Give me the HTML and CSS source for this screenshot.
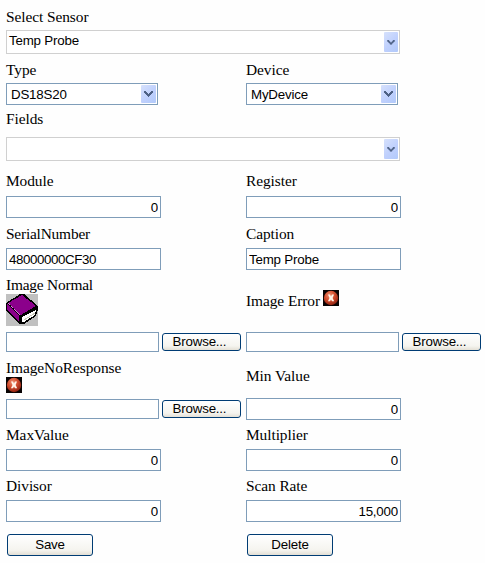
FILE: index.html
```html
<!DOCTYPE html>
<html lang="en">
<head>
<meta charset="utf-8">
<title>Sensor</title>
<link rel="stylesheet" href="styles.css">
</head>
<body>
<svg class="defs" width="0" height="0">
  <defs>
    <radialGradient id="red" cx=".4" cy=".3" r=".7"><stop offset="0" stop-color="#ee8f70"/><stop offset=".5" stop-color="#d34e2e"/><stop offset="1" stop-color="#932412"/></radialGradient>
    <symbol id="chevron" viewBox="0 0 9 6"><path d="M0 0h2v1h1v1h1v1h1V2h1V1h1V0h2v2H8v1H7v1H6v1H5v1H4V5H3V4H2V3H1V2H0z" fill="#4d6185"/></symbol>
    <symbol id="error" viewBox="0 0 16 16"><path d="M0 0h16v16H0z" fill="#080303"/><circle cx="8" cy="8" r="7.2" fill="url(#red)"/><path d="M5 4.500h2l1 2 1-2h2L9.600 8l1.600 3.300H9L8 9.400l-1 1.900H4.900L6.500 8z" fill="#fff4e8"/></symbol>
  </defs>
</svg>
<form class="form">
  <div class="row sensor">
    <div class="field"><label>Select Sensor</label>
      <div class="combo wide"><span class="value">Temp Probe</span><span class="arrow"><svg width="8" height="5"><use href="#chevron"/></svg></span></div></div>
  </div>
  <div class="row type">
    <div class="field"><label>Type</label>
      <div class="combo"><span class="value">DS18S20</span><span class="arrow"><svg width="9" height="6"><use href="#chevron"/></svg></span></div></div>
    <div class="field"><label>Device</label>
      <div class="combo"><span class="value">MyDevice</span><span class="arrow"><svg width="9" height="6"><use href="#chevron"/></svg></span></div></div>
  </div>
  <div class="row fields">
    <div class="field"><label>Fields</label>
      <div class="combo wide"><span class="value"></span><span class="arrow"><svg width="8" height="5"><use href="#chevron"/></svg></span></div></div>
  </div>
  <div class="row module">
    <div class="field"><label>Module</label><input class="text num" value="0"></div>
    <div class="field"><label>Register</label><input class="text num" value="0"></div>
  </div>
  <div class="row serial">
    <div class="field"><label class="tight">SerialNumber</label><input class="text code" value="48000000CF30"></div>
    <div class="field"><label>Caption</label><input class="text" value="Temp Probe"></div>
  </div>
  <div class="row normal">
    <div class="field"><label class="tight">Image Normal</label>
      <svg class="picture" width="32" height="32" shape-rendering="crispEdges">
        <path d="M0 0h32v32H0z" fill="#c0c0c0"/>
        <path d="M14 0h4l14 12v4l-2 6-12 8h-5L0 16V9z" fill="#000"/>
        <path d="M16 1l14 11-15 9L2 9z" fill="#8b008b"/>
        <path d="M1 10l12 12v6L1 15z" fill="#8b008b"/>
        <path d="M2 9l12 12" stroke="#d58bd5" stroke-dasharray="3 1" fill="none"/>
        <path d="M16 23l14-7-1 5-11 7h-2z" fill="#fff"/>
        <path d="M18 26l11-7" stroke="#c8c8b8" fill="none"/>
      </svg>
      <div class="file"><input class="text path"><button class="button browse" type="button">Browse...</button></div></div>
    <div class="field"><label class="with-icon">Image Error <svg width="16" height="16"><use href="#error"/></svg></label>
      <div class="file"><input class="text path"><button class="button browse" type="button">Browse...</button></div></div>
  </div>
  <div class="row missing">
    <div class="field"><label>ImageNoResponse</label>
      <svg class="picture" width="16" height="16"><use href="#error"/></svg>
      <div class="file"><input class="text path"><button class="button browse" type="button">Browse...</button></div></div>
    <div class="field"><label class="min">Min Value</label><input class="text num" value="0"></div>
  </div>
  <div class="row pair">
    <div class="field"><label>MaxValue</label><input class="text num" value="0"></div>
    <div class="field"><label>Multiplier</label><input class="text num" value="0"></div>
  </div>
  <div class="row pair">
    <div class="field"><label>Divisor</label><input class="text num" value="0"></div>
    <div class="field"><label>Scan Rate</label><input class="text num" value="15,000"></div>
  </div>
  <div class="row actions">
    <button class="button" type="button">Save</button>
    <button class="button" type="button">Delete</button>
  </div>
</form>
</body>
</html>
```
FILE: styles.css
```css
* { box-sizing: border-box; }
body { margin: 0; background: #fefefe; color: #000; overflow: hidden; }
.defs { position: absolute; }
.form { padding: 8px 0 0 6px; font: 15.4px/18px "Liberation Serif", serif; }
.row { display: grid; grid-template-columns: 240px 239px; }
.field { display: flex; flex-direction: column; align-items: flex-start; }
label { display: block; height: 18px; margin-bottom: 5px; white-space: nowrap; letter-spacing: -.07px; }
.tight { letter-spacing: -.2px; }

.text, .combo, .button { font: 13.33px/18px "Liberation Sans", Arial, sans-serif; letter-spacing: -.2px; color: #000; }
.text { width: 155px; height: 22px; margin: 0; padding: 1px 2px 0; border: 1px solid #7f9db9; border-radius: 0; background: #fff; outline: 0; }
.num { text-align: right; }
.text.code { letter-spacing: -.4px; }
.path { width: 153px; height: 20px; }

.combo { display: flex; justify-content: space-between; width: 152px; height: 22px; padding: 1px; border: 1px solid #7f9db9; background: #fff; }
.value { padding: 1px 0 0 3px; }
.arrow { display: flex; align-items: center; justify-content: center; width: 15px; height: 18px; border-radius: 1px; background: linear-gradient(135deg, #d6e1fc, #bfd0fd 55%, #b1c9fa); }
.wide { width: 394px; height: 24px; border-color: #d0d0d0; }
.wide .value { padding: 0 0 0 1px; }
.wide .arrow { width: 14px; height: 20px; }

.button { width: 86px; height: 22px; margin: 0 0 0 1px; padding: 0; line-height: 20px; border: 1px solid #003c74; border-radius: 3px; background: linear-gradient(#fff, #f5f4ef 75%, #e3dfd5); }
.button.browse { width: 79px; height: 18px; margin: 0; padding: 0 4px 1px 0; line-height: 15px; }
.file { display: flex; align-items: center; gap: 3px; }
.picture { display: block; margin-bottom: 6px; }

.sensor label, .type label { margin-bottom: 4px; }
.type { margin-top: 7px; }
.fields { margin-top: 5px; }
.fields label { margin-bottom: 9px; }
.module { margin-top: 11px; }
.module label { margin-bottom: 6px; }
.serial { margin-top: 7px; }
.normal { margin-top: 6px; }
.normal label, .missing label { margin-bottom: 0; }
.normal .with-icon { display: flex; gap: 3px; margin: 16px 0 22px; }
.with-icon svg { margin-top: -2px; }
.missing { margin-top: 7px; }
.missing .min { margin: 8px 0 13px; }
.pair { margin-top: 6px; }
.actions { margin-top: 12px; }
```
